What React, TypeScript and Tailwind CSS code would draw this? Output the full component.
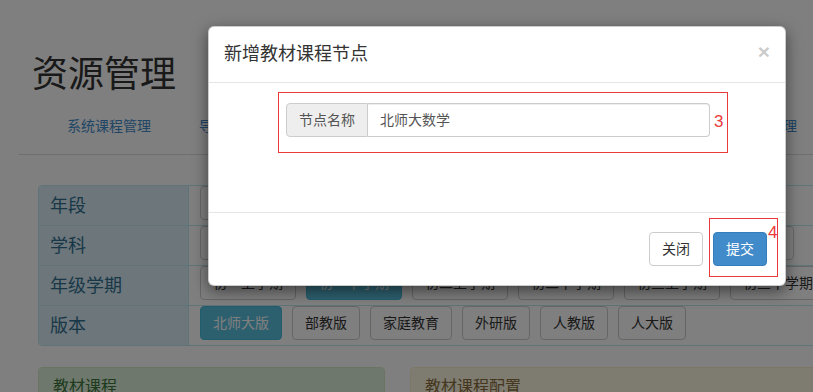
import React from "react";
import clsx from "clsx";

// ─── Page data ──────────────────────────────────────────────────────────────

const navLinks = ["系统课程管理", "导学案资源管理", "教材课程管理", "资源审核管理", "用户权限管理", "统计管理"];

const filterRows = [
  { label: "年段", options: ["小学", "初中", "高中"], active: -1 },
  { label: "学科", options: ["语文", "数学", "英语", "物理", "化学", "生物", "历史", "地理", "思想品德"], active: -1 },
  { label: "年级学期", options: ["初一上学期", "初一下学期", "初二上学期", "初二下学期", "初三上学期", "初三下学期"], active: 1 },
  { label: "版本", options: ["北师大版", "部教版", "家庭教育", "外研版", "人教版", "人大版"], active: 0 },
];

// ─── Background page ────────────────────────────────────────────────────────

function FilterTable() {
  return (
    <div className="ml-[38px] mt-[30px] w-[1100px] overflow-hidden rounded border border-[#bce8f1]">
      {filterRows.map((row, i) => (
        <div key={row.label} className={clsx("flex h-[39px]", i > 0 && "box-content border-t border-[#bce8f1]")}>
          <div className="flex w-[150px] shrink-0 items-center border-r border-[#bce8f1] bg-[#d9edf7] pl-[11px] text-[18px] leading-6 text-[#31708f]">
            {row.label}
          </div>
          <div className="flex gap-[10px] pl-[11px]">
            {row.options.map((opt, j) => (
              <button
                key={opt}
                className={clsx(
                  "h-[34px] shrink-0 whitespace-nowrap rounded border px-3 text-sm leading-5",
                  j === row.active
                    ? "border-[#46b8da] bg-[#5bc0de] text-white"
                    : "border-[#ccc] bg-white text-[#333]"
                )}
              >
                {opt}
              </button>
            ))}
          </div>
        </div>
      ))}
    </div>
  );
}

function Page() {
  return (
    <div>
      <h1 className="pl-[32px] pt-[55px] text-[36px] leading-[40px] font-normal text-[#333]">资源管理</h1>

      <div className="ml-[19px] mt-[11px] flex border-b border-[#ddd] pb-[8px] pl-[24px]">
        {navLinks.map((link) => (
          <a key={link} className="shrink-0 whitespace-nowrap px-6 py-[10px] text-sm leading-5 text-[#428bca]">
            {link}
          </a>
        ))}
      </div>

      <FilterTable />

      <div className="ml-[38px] mt-[21px] flex gap-[25px]">
        <div className="w-[347px] shrink-0 rounded border border-[#d6e9c6]">
          <div className="bg-[#dff0d8] px-[14px] py-[10px] text-[16px] leading-[18px] text-[#3c763d]">教材课程</div>
          <div className="h-[60px] bg-white" />
        </div>
        <div className="w-[724px] shrink-0 rounded border border-[#faebcc]">
          <div className="bg-[#fcf8e3] px-[14px] py-[10px] text-[16px] leading-[18px] text-[#8a6d3b]">教材课程配置</div>
          <div className="h-[60px] bg-white" />
        </div>
      </div>
    </div>
  );
}

// ─── Modal ──────────────────────────────────────────────────────────────────

function NodeModal() {
  return (
    <div className="absolute left-[208px] top-[26px] w-[578px] rounded-md border border-black/20 bg-white shadow-[0_5px_15px_rgba(0,0,0,0.5)]">
      {/* Header */}
      <div className="flex items-start justify-between border-b border-[#e5e5e5] p-[15px]">
        <h4 className="text-[18px] leading-[25px] font-normal text-[#333]">新增教材课程节点</h4>
        <button className="-mt-[1px] text-[21px] leading-[21px] font-bold text-black opacity-20">×</button>
      </div>

      {/* Body */}
      <div className="h-[129px] pt-5">
        <div className="relative ml-[77px] flex h-[34px] w-[424px]">
          <span className="flex items-center rounded-l border border-[#ccc] bg-[#eee] px-3 text-sm leading-5 text-[#555]">
            节点名称
          </span>
          <div className="flex flex-1 items-center rounded-r border border-l-0 border-[#ccc] px-3 text-sm leading-5 text-[#555] shadow-[inset_0_1px_1px_rgba(0,0,0,0.075)]">
            北师大数学
          </div>
          {/* annotation 3 */}
          <div className="pointer-events-none absolute -left-[8px] -top-[11px] h-[61px] w-[450px] border border-[#ea3a3a]" />
          <span className="absolute left-[428px] top-[9px] text-[17px] leading-5 text-[#ea3a3a]">3</span>
        </div>
      </div>

      {/* Footer */}
      <div className="flex justify-end gap-[10px] border-t border-[#e5e5e5] pb-[19px] pr-[18px] pt-[19px]">
        <button className="h-[34px] rounded border border-[#ccc] bg-white px-3 text-sm leading-5 text-[#333]">关闭</button>
        <div className="relative">
          <button className="h-[34px] rounded border border-[#357ebd] bg-[#428bca] px-3 text-sm leading-5 text-white">
            提交
          </button>
          {/* annotation 4 */}
          <div className="pointer-events-none absolute -left-[4px] -top-[14px] h-[59px] w-[69px] border border-[#ea3a3a]" />
          <span className="absolute left-[55px] -top-[9px] text-[17px] leading-5 text-[#ea3a3a]">4</span>
        </div>
      </div>
    </div>
  );
}

export default function App() {
  return (
    <div className="relative h-[392px] w-[813px] overflow-hidden bg-white font-['Liberation_Sans','Noto_Sans_CJK_SC',sans-serif]">
      <Page />
      {/* backdrop */}
      <div className="absolute inset-0 bg-black/50" />
      <NodeModal />
    </div>
  );
}
